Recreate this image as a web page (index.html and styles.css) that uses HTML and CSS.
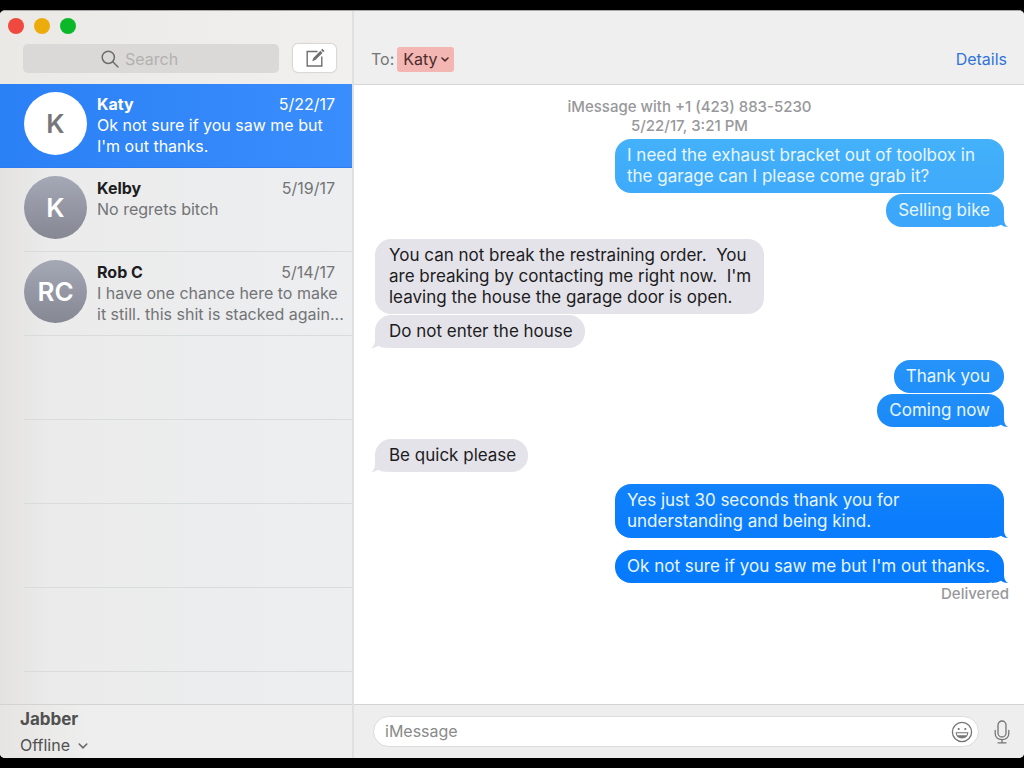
FILE: index.html
```html
<!DOCTYPE html>
<html lang="en">
<head>
<meta charset="utf-8">
<title>Messages</title>
<link rel="stylesheet" href="styles.css">
</head>
<body>
<div class="window">
  <aside class="sidebar">
    <header class="sidebar-head">
      <div class="lights">
        <button class="light red" aria-label="Close"></button>
        <button class="light yellow" aria-label="Minimize"></button>
        <button class="light green" aria-label="Zoom"></button>
      </div>
      <div class="tools">
        <label class="search">
          <svg width="18" height="18" viewBox="0 0 18 18" fill="none" stroke="#6d6d6d" stroke-width="1.5" stroke-linecap="round" aria-hidden="true"><circle cx="7.3" cy="7.3" r="6.1"/><path d="M11.8 11.8 17 17"/></svg>
          <input class="search-input" type="text" placeholder="Search" aria-label="Search">
        </label>
        <button class="compose" aria-label="New message">
          <svg width="22" height="22" viewBox="0 0 22 22" fill="none" aria-hidden="true"><path d="M13.5 4.5H3.2V19H17.8V9.5" stroke="#6f6f6f" stroke-width="1.4"/><path d="M8.2 14.2 9.3 10.9 16.4 3.8 18.5 5.9 11.4 13Z" fill="#6f6f6f"/><path d="M17.1 3.1 18.4 1.8 20.5 3.9 19.2 5.2Z" fill="#6f6f6f"/></svg>
        </button>
      </div>
    </header>
    <ul class="list">
      <li class="item selected">
        <span class="avatar">K</span>
        <div class="body">
          <div class="line"><strong class="name">Katy</strong><time class="date">5/22/17</time></div>
          <p class="preview">Ok not sure if you saw me but<br>I'm out thanks.</p>
        </div>
      </li>
      <li class="item">
        <span class="avatar">K</span>
        <div class="body">
          <div class="line"><strong class="name">Kelby</strong><time class="date">5/19/17</time></div>
          <p class="preview">No regrets bitch</p>
        </div>
      </li>
      <li class="item">
        <span class="avatar">RC</span>
        <div class="body">
          <div class="line"><strong class="name">Rob C</strong><time class="date">5/14/17</time></div>
          <p class="preview">I have one chance here to make<br>it still. this shit is stacked again...</p>
        </div>
      </li>
      <li class="item"></li>
      <li class="item"></li>
      <li class="item"></li>
      <li class="item"></li>
    </ul>
    <footer class="status">
      <strong class="account">Jabber</strong>
      <button class="presence">Offline
        <svg width="10" height="6" viewBox="0 0 10 6" fill="none" stroke="#6a6a6a" stroke-width="1.6" stroke-linecap="round" aria-hidden="true"><path d="M1.2 1 5 4.8 8.8 1"/></svg>
      </button>
    </footer>
  </aside>
  <main class="chat">
    <header class="chat-head">
      <span class="to">To:</span>
      <button class="recipient">Katy
        <svg width="8" height="5" viewBox="0 0 8 5" fill="none" stroke="#4a2c2c" stroke-width="1.6" stroke-linecap="round" aria-hidden="true"><path d="M1 1 4 3.8 7 1"/></svg>
      </button>
      <a class="details" href="#">Details</a>
    </header>
    <section class="thread">
      <p class="stamp">iMessage with +1 (423) 883-5230<br>5/22/17, 3:21 PM</p>
      <div class="group sent">
        <p class="bubble">I need the exhaust bracket out of toolbox in the garage can I please come grab it?</p>
        <p class="bubble tail">Selling bike</p>
      </div>
      <div class="group received">
        <p class="bubble">You can not break the restraining order.&nbsp; You are breaking by contacting me right now.&nbsp; I'm leaving the house the garage door is open.</p>
        <p class="bubble tail">Do not enter the house</p>
      </div>
      <div class="group sent">
        <p class="bubble">Thank you</p>
        <p class="bubble tail">Coming now</p>
      </div>
      <div class="group received">
        <p class="bubble tail">Be quick please</p>
      </div>
      <div class="group sent">
        <p class="bubble tail">Yes just 30 seconds thank you for understanding and being kind.</p>
      </div>
      <div class="group sent">
        <p class="bubble tail">Ok not sure if you saw me but I'm out thanks.</p>
      </div>
      <p class="receipt">Delivered</p>
    </section>
    <footer class="composer">
      <div class="field">
        <input class="field-input" type="text" placeholder="iMessage" aria-label="iMessage">
        <button class="icon" aria-label="Emoji">
          <svg width="22" height="22" viewBox="0 0 22 22" fill="none" aria-hidden="true"><circle cx="11" cy="11" r="9.6" stroke="#757575" stroke-width="1.3"/><circle cx="7.7" cy="8" r="1.1" fill="#757575"/><circle cx="14.3" cy="8" r="1.1" fill="#757575"/><path d="M5.2 11.8H16.8C16.5 15 14 17 11 17S5.5 15 5.2 11.8Z" stroke="#757575" stroke-width="1.1"/><path d="M6 14.2H16C15 16 13.2 17 11 17S7 16 6 14.2Z" fill="#757575"/></svg>
        </button>
      </div>
      <button class="icon" aria-label="Dictate">
        <svg width="16" height="24" viewBox="0 0 16 24" fill="none" stroke="#757575" stroke-width="1.3" stroke-linecap="round" aria-hidden="true"><rect x="4" y="1" width="8" height="16" rx="4"/><path d="M1.2 10.5V13.5C1.2 17.2 4 19.6 8 19.6S14.8 17.2 14.8 13.5V10.5M8 19.6V22.6M4 22.8H12"/></svg>
      </button>
    </footer>
  </main>
</div>
</body>
</html>
```
FILE: styles.css
```css
* { box-sizing: border-box; }

body {
  margin: 0;
  padding: 10px 0;
  height: 100vh;
  background: #000;
  color: #1d1d1f;
  font: 16px/21px Inter, "Liberation Sans", sans-serif;
}

p, ul { margin: 0; padding: 0; }
button, input { font: inherit; color: inherit; border: 0; padding: 0; background: none; }

.window {
  display: grid;
  grid-template-columns: 354px 1fr;
  height: 100%;
  border-radius: 5px;
  border-top: 1px solid #a9a8a6;
  background: #fff;
  overflow: hidden;
}

.sidebar {
  display: flex;
  flex-direction: column;
  min-width: 0;
  min-height: 0;
  border-right: 2px solid #dfe0e1;
  background: linear-gradient(90deg, #e3e2e0, #ebebeb 50px, #edeef0);
}

.sidebar-head {
  height: 73px;
  flex: none;
  padding: 7px 16px 0 8px;
  background: linear-gradient(90deg, #ebe9e6, #f1f0ef);
}

.lights { display: flex; gap: 10px; }
.light { width: 16px; height: 16px; border-radius: 50%; }
.red { background: #f0493f; }
.yellow { background: #ecac0c; }
.green { background: #0bb829; }

.tools { display: flex; gap: 14px; padding: 10px 0 0 15px; }
.search {
  flex: 1;
  min-width: 0;
  display: flex;
  align-items: center;
  gap: 6px;
  height: 29px;
  padding: 1px 0 0 78px;
  border-radius: 5px;
  background: #dad9d7;
}
.search-input { flex: 1; min-width: 0; outline: 0; }
.search-input::placeholder { color: #b2b1af; opacity: 1; }
.compose {
  flex: none;
  display: grid;
  place-items: center;
  width: 43px;
  height: 28px;
  border-radius: 5px;
  background: #fff;
  box-shadow: 0 0 1px 1px #d6d5d3;
}

.list { flex: 1; min-height: 0; overflow: hidden; list-style: none; }
.item {
  display: flex;
  gap: 10px;
  height: 84px;
  margin-left: 24px;
  padding: 8px 17px 0 0;
  border-bottom: 1px solid #d9dbdd;
}
.selected {
  margin-left: 0;
  padding-left: 24px;
  border-color: #2f7cf0;
  background: linear-gradient(90deg, #2a80f5, #3a8dfc);
  color: #fff;
}
.avatar {
  flex: none;
  display: grid;
  place-items: center;
  width: 63px;
  height: 63px;
  border-radius: 50%;
  background: linear-gradient(#a5a8b5, #858893);
  color: #fff;
  font-size: 26px;
  font-weight: 600;
}
.selected .avatar { background: #fff; color: #77777a; }
.body { flex: 1; min-width: 0; padding-top: 2px; }
.line { display: flex; justify-content: space-between; }
.name { font-weight: 700; }
.date, .preview { color: #727477; }
.selected .date, .selected .preview { color: #fff; }
.preview { white-space: nowrap; }

.status {
  flex: none;
  height: 54px;
  padding: 4px 20px 0;
  border-top: 1px solid #d3d3d3;
  background: linear-gradient(90deg, #e6e5e3, #eeeeee 90px);
  color: #505050;
}
.account { display: block; margin-bottom: 5px; font-size: 17px; }
.presence { display: flex; align-items: center; gap: 8px; }

.chat { display: flex; flex-direction: column; min-width: 0; min-height: 0; }
.chat-head {
  flex: none;
  display: flex;
  align-items: center;
  height: 74px;
  padding: 24px 17px 0;
  border-bottom: 1px solid #d6d6d6;
  background: #efefef;
}
.to { color: #757575; }
.recipient {
  display: flex;
  align-items: center;
  gap: 3px;
  height: 25px;
  margin-left: 3px;
  padding: 0 5px 0 6px;
  border-radius: 3px;
  background: #f3b6b3;
  color: #4a2c2c;
}
.details { margin-left: auto; color: #2f74d8; text-decoration: none; }

.thread {
  flex: 1;
  min-height: 0;
  display: flex;
  flex-direction: column;
  gap: 12px;
  padding: 12px 20px 0 21px;
  overflow: hidden;
}
.stamp {
  margin-bottom: -8px;
  color: #98989b;
  font-size: 15px;
  font-weight: 500;
  line-height: 19px;
  text-align: center;
}
.group { display: flex; flex-direction: column; gap: 1px; font-size: 17px; }
.sent { align-items: flex-end; color: #e8f6ff; }
.received { align-items: flex-start; color: #1c1c1e; }
.bubble {
  position: relative;
  max-width: 389px;
  padding: 6px 14px 6px 12px;
  border-radius: 16px;
}
.received .bubble { padding: 6px 12px 6px 14px; background: #e4e3e9; }

/* Sent bubbles share one gradient that spans the window. */
.sent .bubble,
.sent .tail::after {
  background: linear-gradient(#44b1fa 18%, #3ba6fa 29%, #1e8df9 53%, #0b7dfc 68%, #057afd 76%) fixed;
}
.tail::after {
  content: "";
  position: absolute;
  right: -4px;
  bottom: 0;
  width: 18px;
  height: 16px;
  clip-path: path("M14 0V8C14 12 15.5 14.5 18 16C15.5 16 13 15.2 11 13.8C8 15.4 5 16 2 16L0 0Z");
}
.received .tail::after {
  right: auto;
  left: -4px;
  background: #e4e3e9;
  transform: scaleX(-1);
}
.receipt {
  margin: -12px -5px 0 0;
  color: #98989b;
  font-size: 15px;
  font-weight: 500;
  text-align: right;
}

.composer {
  flex: none;
  display: flex;
  align-items: center;
  gap: 15px;
  height: 54px;
  padding: 0 14px 0 19px;
  border-top: 1px solid #d3d3d3;
  background: #eeeeee;
}
.field {
  flex: 1;
  display: flex;
  align-items: center;
  height: 31px;
  padding: 0 5px 0 11px;
  border: 1px solid #dcdcdc;
  border-radius: 16px;
  background: #fff;
}
.field-input { flex: 1; min-width: 0; outline: 0; }
.field-input::placeholder { color: #8a8a8a; opacity: 1; }
.icon { display: grid; place-items: center; }
```
